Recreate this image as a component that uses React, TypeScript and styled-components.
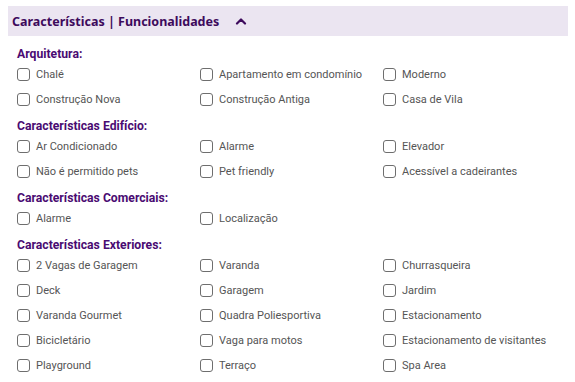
import React from 'react';
import styled, {createGlobalStyle} from 'styled-components';

type Group = {title: string; items: string[]};

const groups: Group[] = [
    {title: 'Arquitetura:', items: ['Chalé', 'Apartamento em condomínio', 'Moderno', 'Construção Nova', 'Construção Antiga', 'Casa de Vila']},
    {title: 'Características Edifício:', items: ['Ar Condicionado', 'Alarme', 'Elevador', 'Não é permitido pets', 'Pet friendly', 'Acessível a cadeirantes']},
    {title: 'Características Comerciais:', items: ['Alarme', 'Localização']},
    {
        title: 'Características Exteriores:',
        items: [
            '2 Vagas de Garagem', 'Varanda', 'Churrasqueira',
            'Deck', 'Garagem', 'Jardim',
            'Varanda Gourmet', 'Quadra Poliesportiva', 'Estacionamento',
            'Bicicletário', 'Vaga para motos', 'Estacionamento de visitantes',
            'Playground', 'Terraço', 'Spa Area',
        ],
    },
];

export default function App() {
    return (
        <>
            <GlobalStyle/>
            <Panel>
                <Header>
                    <HeaderTitle>Características | Funcionalidades</HeaderTitle>
                    <Chevron width="12" height="8" viewBox="0 0 12 8">
                        <path d="M2 6.5 L6 2.5 L10 6.5" fill="none" stroke="#3d0a5c" strokeWidth="2.2" strokeLinecap="round" strokeLinejoin="round"/>
                    </Chevron>
                </Header>
                <Body>
                    {groups.map((g) => (
                        <Section key={g.title}>
                            <SectionTitle>{g.title}</SectionTitle>
                            <Grid>
                                {g.items.map((item, i) => (
                                    <Option key={item + i}>
                                        <Box type="checkbox"/>
                                        <Label>{item}</Label>
                                    </Option>
                                ))}
                            </Grid>
                        </Section>
                    ))}
                </Body>
            </Panel>
        </>
    );
}

const GlobalStyle = createGlobalStyle`
    body {
        margin: 0;
        background: #fff;
        font-family: Roboto, "Liberation Sans", sans-serif;
    }
`;

const Panel = styled.div`
    padding: 6px 7px 0 8px;
`;

const Header = styled.div`
    height: 30px;
    background: #ebe5f1;
    display: flex;
    align-items: center;
    padding-left: 4px;
    gap: 16px;
`;

const HeaderTitle = styled.span`
    font-family: "Noto Sans", sans-serif;
    font-weight: 700;
    font-size: 12.5px;
    color: #3d0a5c;
`;

const Chevron = styled.svg`
    display: block;
`;

const Body = styled.div`
    padding: 10px 0 0 9px;
    display: flex;
    flex-direction: column;
    gap: 6px;
`;

const Section = styled.div`
    display: flex;
    flex-direction: column;
`;

const SectionTitle = styled.div`
    font-family: Roboto, sans-serif;
    font-weight: 700;
    font-size: 12.2px;
    color: #4a0b72;
    line-height: 16px;
`;

const Grid = styled.div`
    display: grid;
    grid-template-columns: 183px 183px 1fr;
`;

const Option = styled.label`
    display: flex;
    align-items: center;
    gap: 6px;
    height: 25px;
`;

const Box = styled.input`
    appearance: none;
    margin: 0;
    width: 13px;
    height: 13px;
    border: 1px solid #6e6e6e;
    border-radius: 3px;
    background: #fff;
`;

const Label = styled.span`
    font-size: 11px;
    color: #555;
`;
